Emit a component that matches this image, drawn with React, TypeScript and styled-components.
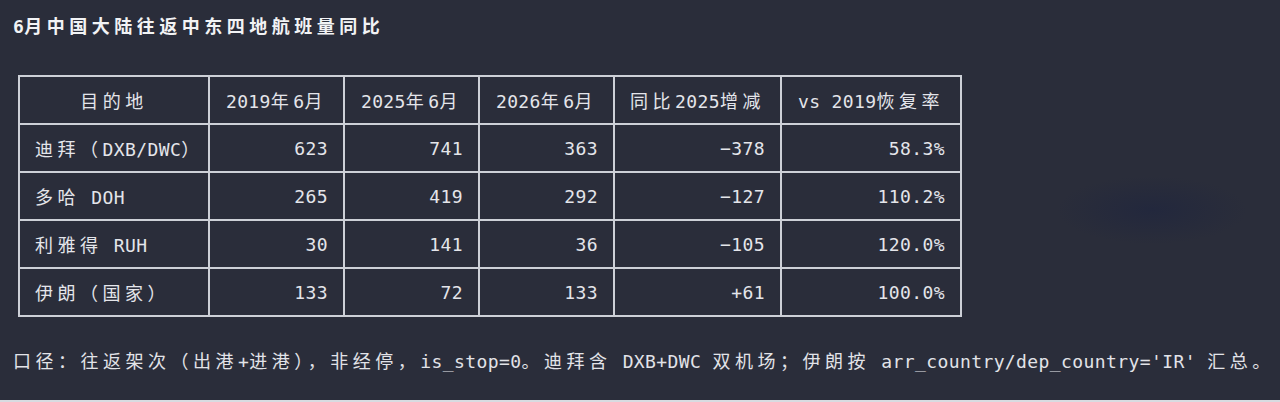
import React from "react";
import styled, { createGlobalStyle } from "styled-components";

const GlobalStyle = createGlobalStyle`
  html, body {
    margin: 0;
    padding: 0;
    background: #2a2d3a;
  }
  #root {
    width: 1280px;
    height: 402px;
  }
`;

const MONO = `"DejaVu Sans Mono", "Noto Sans CJK SC", monospace`;

const Page = styled.div`
  width: 1280px;
  height: 402px;
  overflow: hidden;
  box-sizing: border-box;
  display: flex;
  flex-direction: column;
  padding: 15px 0 0 13px;
  background:
    radial-gradient(ellipse 95px 34px at 1152px 210px, rgba(32, 38, 62, 0.75), rgba(32, 38, 62, 0) 100%),
    #2a2d3a;
  font-family: ${MONO};
  color: #e4e5ea;
`;

const Title = styled.h1`
  margin: 0;
  font-family: ${MONO};
  font-size: 18px;
  line-height: 24px;
  font-weight: 700;
  letter-spacing: 0.4px;
  color: #f2f3f5;
  white-space: nowrap;
`;

const Cjk = styled.span<{ $spacing: number }>`
  letter-spacing: ${(p) => p.$spacing}px;
`;

const Table = styled.div`
  margin: 36px 0 0 5px;
  display: grid;
  grid-template-columns: 188px 133px 133px 133px 165px 178px;
  grid-auto-rows: 46px;
  gap: 2px;
  padding: 2px;
  width: fit-content;
  background: #cdd0d7;
`;

const Cell = styled.div<{ $align: "left" | "right" | "center" }>`
  background: #2a2d3a;
  display: flex;
  align-items: center;
  justify-content: ${(p) =>
    p.$align === "left" ? "flex-start" : p.$align === "right" ? "flex-end" : "center"};
  padding: 0 15px;
  font-size: 18px;
  letter-spacing: 0.4px;
  color: #e4e5ea;
`;

const CellText = styled.span`
  white-space: pre;
`;

const Footer = styled.p`
  margin: 32px 0 0 0;
  font-size: 18px;
  line-height: 26px;
  letter-spacing: 0.4px;
  white-space: pre;
  color: #e2e3e8;
`;

const BottomEdge = styled.div`
  margin-top: auto;
  margin-left: -13px;
  height: 2px;
  width: 1280px;
  background: #d8dbe1;
`;

const CJK_RE = /([\u3000-\u303f\u3400-\u9fff\uff00-\uffef]+)/;

function Mixed({ text, spacing }: { text: string; spacing: number }) {
  const parts = text.split(CJK_RE).filter((s) => s.length > 0);
  return (
    <>
      {parts.map((part, i) =>
        CJK_RE.test(part) ? (
          <Cjk key={i} $spacing={spacing}>
            {part}
          </Cjk>
        ) : (
          <React.Fragment key={i}>{part}</React.Fragment>
        )
      )}
    </>
  );
}

const headers = ["目的地", "2019年6月", "2025年6月", "2026年6月", "同比2025增减", "vs 2019恢复率"];

const rows: string[][] = [
  ["迪拜（DXB/DWC）", "623", "741", "363", "−378", "58.3%"],
  ["多哈 DOH", "265", "419", "292", "−127", "110.2%"],
  ["利雅得 RUH", "30", "141", "36", "−105", "120.0%"],
  ["伊朗（国家）", "133", "72", "133", "+61", "100.0%"],
];

export default function App() {
  return (
    <>
      <GlobalStyle />
      <Page>
        <Title>
          <Mixed text="6月中国大陆往返中东四地航班量同比" spacing={4.5} />
        </Title>
        <Table>
          {headers.map((h) => (
            <Cell key={h} $align="center">
              <CellText>
                <Mixed text={h} spacing={4.5} />
              </CellText>
            </Cell>
          ))}
          {rows.map((r) =>
            r.map((v, j) => (
              <Cell key={r[0] + j} $align={j === 0 ? "left" : "right"}>
                <CellText>
                  <Mixed text={v} spacing={4.5} />
                </CellText>
              </Cell>
            ))
          )}
        </Table>
        <Footer>
          <Mixed
            text="口径：往返架次（出港+进港），非经停，is_stop=0。迪拜含 DXB+DWC 双机场；伊朗按 arr_country/dep_country='IR' 汇总。"
            spacing={4.5}
          />
        </Footer>
        <BottomEdge />
      </Page>
    </>
  );
}
